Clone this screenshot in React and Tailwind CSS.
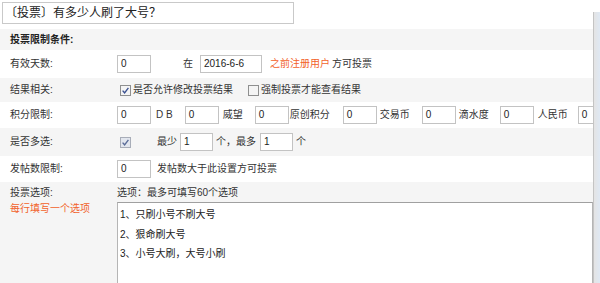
import React from "react";

const Check = ({ disabled }) => (
  <span
    className={`inline-flex w-[11px] h-[11px] shrink-0 items-center justify-center border ${
      disabled ? "border-[#a8adb8] bg-[#e2e6ee]" : "border-[#8e8f8f] bg-[#f4f4f4]"
    }`}
  >
    <svg width="9" height="9" viewBox="0 0 9 9">
      <path d="M1.6 4.6 L3.6 6.8 L7.4 1.8" fill="none" stroke={disabled ? "#5b6d99" : "#3d5392"} strokeWidth="1.4" />
    </svg>
  </span>
);

const Input = ({ w = "w-[34px]", value }) => (
  <span
    className={`${w} h-[18px] shrink-0 border border-[#c3c3c3] bg-white pl-[3px] text-[10px] leading-[16px] text-[#222]`}
  >
    {value}
  </span>
);

const Row = ({ label, bg, h, children }) => (
  <div className={`flex items-center ${bg ? "bg-[#f5f5f5]" : "bg-white"} ${h}`}>
    <div className="w-[117px] shrink-0 pl-[10px]">{label}</div>
    <div className="flex items-center whitespace-nowrap">{children}</div>
  </div>
);

export default function App() {
  return (
    <div
      className="flex w-[600px] h-[283px] overflow-hidden bg-white text-[10px] leading-[14px] text-[#333]"
      style={{ fontFamily: '"Liberation Sans", "Noto Sans CJK SC", sans-serif' }}
    >
      <div className="w-[593px] shrink-0 flex flex-col overflow-hidden">
        <div className="h-[29px] shrink-0 pt-[2px] pl-[2px]">
          <div className="w-[292px] h-[22px] border border-[#c9c9c9] pl-[2px] text-[12px] leading-[20px] text-[#222]">
            〔投票〕有多少人刷了大号？
          </div>
        </div>
        <div className="h-[21px] shrink-0 bg-[#f5f5f5] pl-[10px] font-bold leading-[21px] text-[#222]">
          投票限制条件:
        </div>
        <Row label="有效天数:" h="h-[28px]">
          <Input value="0" />
          <span className="ml-[32px]">在</span>
          <span className="ml-[7px] flex">
            <Input w="w-[62px]" value="2016-6-6" />
          </span>
          <span className="ml-[8px] text-[#f2622a]">之前注册用户</span>
          <span className="ml-[2px]">方可投票</span>
        </Row>
        <Row label="结果相关:" bg h="h-[24px]">
          <span className="ml-[3px] flex">
            <Check />
          </span>
          <span className="ml-[2px]">是否允许修改投票结果</span>
          <span className="ml-[15px] flex">
            <span className="inline-block w-[11px] h-[11px] border border-[#8e8f8f] bg-[#f4f4f4]" />
          </span>
          <span className="ml-[2px]">强制投票才能查看结果</span>
        </Row>
        <Row label="积分限制:" h="h-[26px]">
          <Input value="0" />
          <span className="ml-[5px]">D B</span>
          <span className="ml-[12px] flex"><Input value="0" /></span>
          <span className="ml-[4px]">威望</span>
          <span className="ml-[12px] flex"><Input value="0" /></span>
          <span className="ml-[1px]">原创积分</span>
          <span className="ml-[13px] flex"><Input value="0" /></span>
          <span className="ml-[3px]">交易币</span>
          <span className="ml-[12px] flex"><Input value="0" /></span>
          <span className="ml-[3px]">滴水度</span>
          <span className="ml-[11px] flex"><Input value="0" /></span>
          <span className="ml-[4px]">人民币</span>
          <span className="ml-[10px] flex"><Input value="0" /></span>
        </Row>
        <Row label="是否多选:" bg h="h-[28px]">
          <span className="ml-[3px] flex">
            <Check disabled />
          </span>
          <span className="ml-[26px]">最少</span>
          <span className="ml-[3px] flex"><Input w="w-[33px]" value="1" /></span>
          <span className="ml-[3px]">个，最多</span>
          <span className="ml-[4px] flex"><Input w="w-[33px]" value="1" /></span>
          <span className="ml-[3px]">个</span>
        </Row>
        <Row label="发帖数限制:" h="h-[26px]">
          <Input value="0" />
          <span className="ml-[6px]">发帖数大于此设置方可投票</span>
        </Row>
        <div className="flex flex-1 bg-[#f5f5f5]">
          <div className="w-[117px] shrink-0 pl-[10px] pt-[3px] leading-[16px]">
            <div>投票选项:</div>
            <div className="text-[#f2622a]">每行填写一个选项</div>
          </div>
          <div className="flex flex-1 flex-col pt-[3px]">
            <div className="leading-[16px]">选项：最多可填写60个选项</div>
            <div className="mt-[1px] flex-1 border border-b-0 border-[#b5b5b5] border-t-[#a0a0a0] bg-white pl-[2px] pt-[2px] leading-[19.5px] text-[#222]">
              <div>1、只刷小号不刷大号</div>
              <div>2、狠命刷大号</div>
              <div>3、小号大刷，大号小刷</div>
            </div>
          </div>
        </div>
      </div>
      <div className="flex w-[7px] shrink-0 flex-col">
        <div className="h-[12px] shrink-0 bg-white" />
        <div className="flex-1 border-l border-[#c4c4c4] bg-gradient-to-r from-[#e4e4e4] to-[#dfe8f3]" />
      </div>
    </div>
  );
}
